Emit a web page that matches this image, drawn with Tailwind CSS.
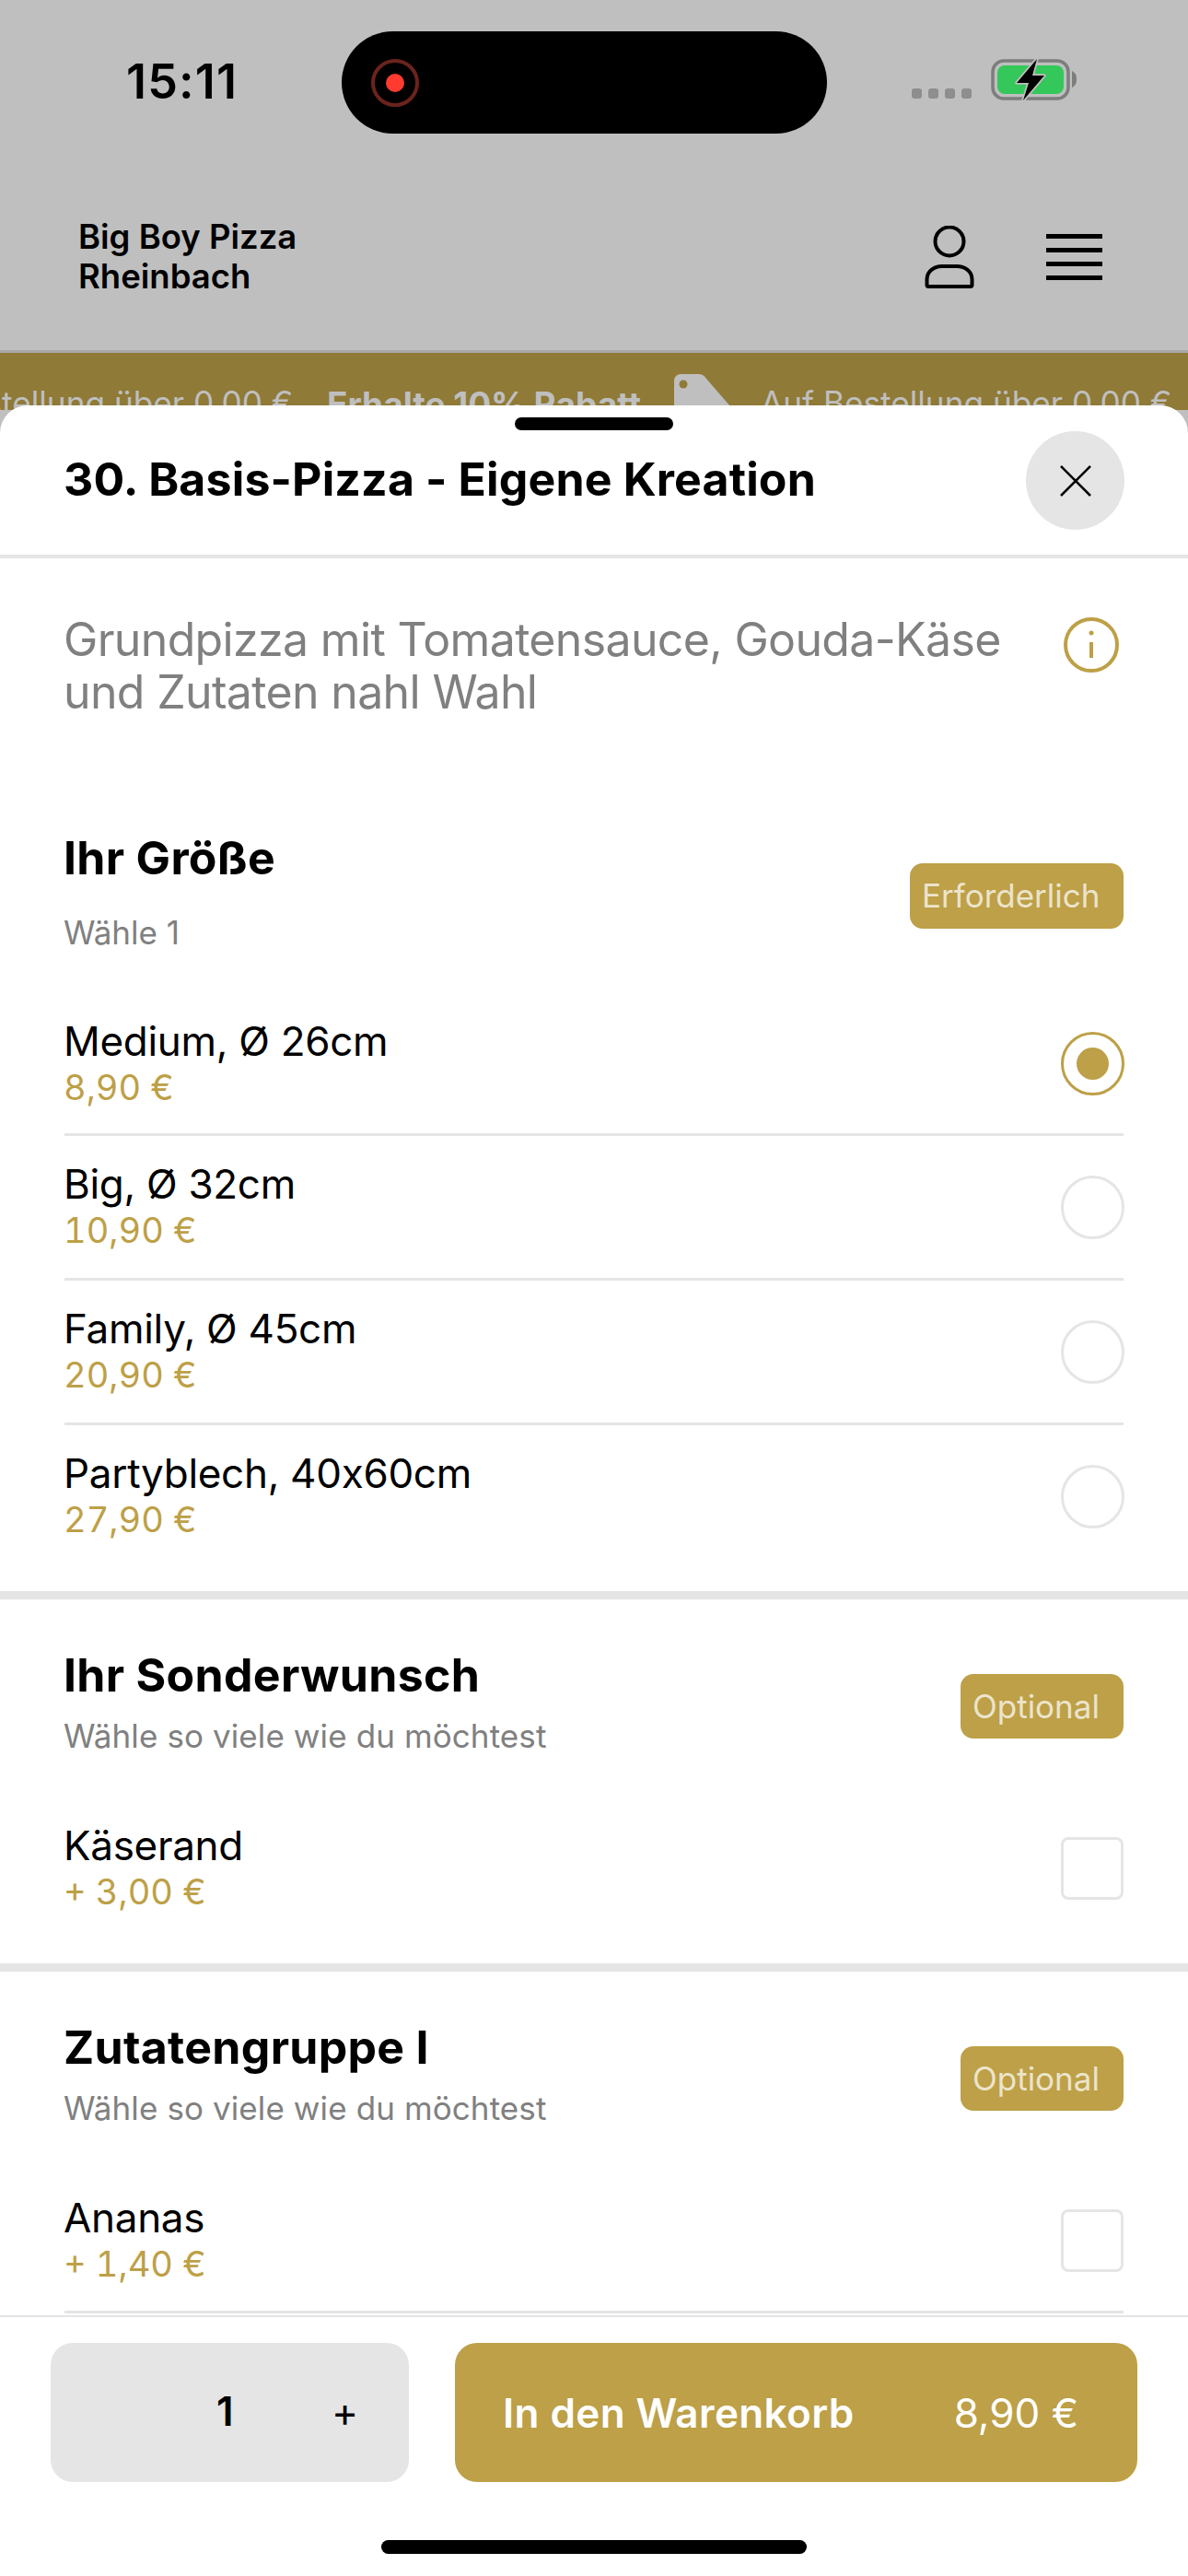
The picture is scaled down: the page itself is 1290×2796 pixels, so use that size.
<!DOCTYPE html>
<html lang="de">
<head>
    <meta charset="UTF-8">
    <meta name="viewport" content="width=device-width, initial-scale=1.0">
    <title>Big Boy Pizza Rheinbach</title>
    <script src="https://cdn.jsdelivr.net/npm/@tailwindcss/browser@4"></script>
</head>
<body class="bg-white font-['Inter',sans-serif]">
    <div class="relative w-[1290px] h-[2796px] overflow-hidden bg-[#bfbfbf]">
        <!-- Status bar -->
        <div class="h-[145px] pt-[34px] pl-[137px] pr-[120px] flex items-start">
            <div class="w-[234px] h-[109px] flex items-center text-[52px] font-semibold text-black tracking-[1.2px]">15:11</div>
            <div class="w-[527px] h-[111px] rounded-[56px] bg-black flex items-center pl-[32px]">
                <div class="w-[52px] h-[52px] rounded-full border-[4px] border-[#6b231d] flex items-center justify-center">
                    <div class="w-[20px] h-[20px] rounded-full bg-[#ff3b30]"></div>
                </div>
            </div>
            <div class="flex-1 h-[111px] flex items-center justify-end gap-[21px] relative">
                <div class="flex gap-[7px] mt-[24px]">
                    <div class="w-[11px] h-[11px] rounded-[3px] bg-[#8e8e8e]"></div>
                    <div class="w-[11px] h-[11px] rounded-[3px] bg-[#8e8e8e]"></div>
                    <div class="w-[11px] h-[11px] rounded-[3px] bg-[#8e8e8e]"></div>
                    <div class="w-[11px] h-[11px] rounded-[3px] bg-[#8e8e8e]"></div>
                </div>
                <svg width="94" height="46" viewBox="0 0 94 46" class="-mt-[6px]">
                    <rect x="2" y="2" width="82" height="41" rx="12" fill="none" stroke="#7d7d7d" stroke-width="3.5"/>
                    <rect x="7" y="7" width="72" height="31" rx="8" fill="#34c759"/>
                    <path d="M88 13 C92 15 93 18 93 22 C93 26 92 29 88 31 Z" fill="#7d7d7d"/>
                    <path d="M50 0 L28 26 L41 26 L35 45 L58 18 L45 18 Z" fill="black" stroke="#bfbfbf" stroke-width="3.5" paint-order="stroke" stroke-linejoin="round"/>
                </svg>
            </div>
        </div>

        <!-- Restaurant header -->
        <div class="h-[238px] border-b-[3px] border-[#a9a9a9] flex items-center pl-[85px] pr-[93px] pt-[33px]">
            <div class="flex-1 text-[36.5px] leading-[43px] font-semibold text-black">Big Boy Pizza<br>Rheinbach</div>
            <svg width="56" height="68" viewBox="0 0 56 68" fill="none" stroke="black" stroke-width="4" class="mr-[77px]">
                <ellipse cx="28" cy="17" rx="15.5" ry="15.5"/>
                <path d="M5 66 C4 66 3.5 65 3.5 64 V58 C3.5 49 12 44 20 44 H36 C44 44 52.5 49 52.5 58 V64 C52.5 65 52 66 51 66 Z" stroke-linejoin="round"/>
            </svg>
            <div class="w-[61px] flex flex-col gap-[10px]">
                <div class="h-[5px] bg-black"></div>
                <div class="h-[5px] bg-black"></div>
                <div class="h-[5px] bg-black"></div>
                <div class="h-[5px] bg-black"></div>
            </div>
        </div>

        <!-- Discount banner, mostly covered by the sheet -->
        <div class="h-[62px] bg-[#8f7a37] relative overflow-hidden text-[35.2px] text-[#bfbfbf] whitespace-nowrap">
            <div class="absolute top-[28px] left-[-128px] flex items-start">
                <span class="w-[483px]">Auf Bestellung über 0,00 €</span>
                <span class="w-[471px] font-bold text-[37px]">Erhalte 10% Rabatt</span>
                <span>Auf Bestellung über 0,00 €</span>
            </div>
            <svg width="64" height="40" viewBox="0 0 64 40" class="absolute left-[732px] top-[23px]">
                <path d="M0 8 Q0 0 8 0 H27 Q32 0 35 5 L61 35 V40 H0 Z" fill="#bfbfbf"/>
                <circle cx="10" cy="11" r="4.5" fill="#8f7a37"/>
            </svg>
        </div>

        <!-- Bottom sheet -->
        <div class="absolute left-0 right-0 top-[440px] bottom-0 bg-white rounded-t-[30px] flex flex-col">
            <div class="h-[166px] shrink-0 border-b-[4px] border-[#e5e5e5] relative flex items-center justify-between pl-[70px] pr-[70px] pt-[1px]">
                <div class="absolute top-[13px] left-[559px] w-[172px] h-[14px] rounded-full bg-black"></div>
                <div class="text-[50px] font-bold text-black -ml-[1px] -mt-[2px] tracking-[0.15px]">30. Basis-Pizza - Eigene Kreation</div>
                <div class="w-[107px] h-[107px] rounded-full bg-[#e5e5e5] flex items-center justify-center mr-[-1px]">
                    <svg width="36" height="36" viewBox="0 0 36 36" stroke="black" stroke-width="2.5"><path d="M2 2 L34 34 M34 2 L2 34"/></svg>
                </div>
            </div>

            <div class="flex-1 overflow-hidden">
                <div class="pl-[70px] pr-[70px] pt-[60px] flex justify-between h-[298px]">
                    <p class="text-[50px] leading-[57px] text-[#808080] w-[1060px] tracking-[-0.65px] -ml-[1px]">Grundpizza mit Tomatensauce, Gouda-Käse und Zutaten nahl Wahl</p>
                    <svg width="60" height="60" viewBox="0 0 60 60" fill="none" stroke="#bda047" stroke-width="4" class="mt-[4px] mr-[5px]">
                        <circle cx="30" cy="30" r="28"/>
                        <path d="M30 27 V44" stroke-width="4"/>
                        <circle cx="30" cy="17" r="2.5" fill="#bda047" stroke="none"/>
                    </svg>
                </div>

                <!-- Ihr Größe -->
                <div class="px-[70px] flex justify-between items-start h-[118px]">
                    <div class="-ml-[1px] -mt-[3px]">
                        <h2 class="text-[50px] leading-[60px] font-bold text-black tracking-[0.3px]">Ihr Größe</h2>
                        <p class="text-[35px] leading-[40px] text-[#808080] mt-[31px]">Wähle 1</p>
                    </div>
                    <div class="mt-[33px] w-[232px] h-[71px] rounded-[14px] bg-[#bda047] flex items-center pl-[13px] text-[35px] text-[#ece4cc]">Erforderlich</div>
                </div>

                <div class="px-[70px] pt-[54px] pb-[23px] border-b-[9px] border-[#e5e5e5]">
                    <div class="h-[157px] border-b-[3px] border-[#e5e5e5] flex justify-between items-center pt-[3px]">
                        <div class="-ml-[1px]">
                            <div class="text-[44px] leading-[50px] text-black tracking-[-0.3px]">Medium, Ø 26cm</div>
                            <div class="text-[38px] leading-[50px] text-[#bda047] tabular-nums">8,90 €</div>
                        </div>
                        <div class="w-[69px] h-[69px] rounded-full border-[3px] border-[#bda047] flex items-center justify-center mr-[-1px]">
                            <div class="w-[35px] h-[35px] rounded-full bg-[#bda047]"></div>
                        </div>
                    </div>
                    <div class="h-[157px] border-b-[3px] border-[#e5e5e5] flex justify-between items-center">
                        <div class="-ml-[1px]">
                            <div class="text-[44px] leading-[50px] text-black tracking-[-0.3px]">Big, Ø 32cm</div>
                            <div class="text-[38px] leading-[50px] text-[#bda047] tabular-nums">10,90 €</div>
                        </div>
                        <div class="w-[69px] h-[69px] rounded-full border-[3px] border-[#e5e5e5] mr-[-1px]"></div>
                    </div>
                    <div class="h-[157px] border-b-[3px] border-[#e5e5e5] flex justify-between items-center">
                        <div class="-ml-[1px]">
                            <div class="text-[44px] leading-[50px] text-black tracking-[-0.3px]">Family, Ø 45cm</div>
                            <div class="text-[38px] leading-[50px] text-[#bda047] tabular-nums">20,90 €</div>
                        </div>
                        <div class="w-[69px] h-[69px] rounded-full border-[3px] border-[#e5e5e5] mr-[-1px]"></div>
                    </div>
                    <div class="h-[157px] flex justify-between items-center pb-[3px]">
                        <div class="-ml-[1px]">
                            <div class="text-[44px] leading-[50px] text-black tracking-[-0.3px]">Partyblech, 40x60cm</div>
                            <div class="text-[38px] leading-[50px] text-[#bda047] tabular-nums">27,90 €</div>
                        </div>
                        <div class="w-[69px] h-[69px] rounded-full border-[3px] border-[#e5e5e5] mr-[-1px]"></div>
                    </div>
                </div>

                <!-- Ihr Sonderwunsch -->
                <div class="border-b-[9px] border-[#e5e5e5] px-[70px] h-[404px]">
                    <div class="flex justify-between items-start pt-[52px]">
                        <div class="-ml-[1px]">
                            <h2 class="text-[50px] leading-[60px] font-bold text-black tracking-[0.3px]">Ihr Sonderwunsch</h2>
                            <p class="text-[35px] leading-[40px] text-[#808080] mt-[16px] tracking-[0.1px]">Wähle so viele wie du möchtest</p>
                        </div>
                        <div class="mt-[29px] w-[177px] h-[70px] rounded-[14px] bg-[#bda047] flex items-center pl-[13px] text-[35px] text-[#ece4cc]">Optional</div>
                    </div>
                    <div class="flex justify-between items-center mt-[74px]">
                        <div class="-ml-[1px]">
                            <div class="text-[44px] leading-[50px] text-black tracking-[-0.3px]">Käserand</div>
                            <div class="text-[38px] leading-[50px] text-[#bda047] tabular-nums">+ 3,00 €</div>
                        </div>
                        <div class="w-[68px] h-[68px] rounded-[8px] border-[3px] border-[#e5e5e5]"></div>
                    </div>
                </div>

                <!-- Zutatengruppe I -->
                <div class="px-[70px]">
                    <div class="flex justify-between items-start pt-[52px]">
                        <div class="-ml-[1px]">
                            <h2 class="text-[50px] leading-[60px] font-bold text-black tracking-[0.3px]">Zutatengruppe I</h2>
                            <p class="text-[35px] leading-[40px] text-[#808080] mt-[16px] tracking-[0.1px]">Wähle so viele wie du möchtest</p>
                        </div>
                        <div class="mt-[29px] w-[177px] h-[70px] rounded-[14px] bg-[#bda047] flex items-center pl-[13px] text-[35px] text-[#ece4cc]">Optional</div>
                    </div>
                    <div class="flex justify-between items-center mt-[74px] pb-[26px] border-b-[3px] border-[#e5e5e5]">
                        <div class="-ml-[1px]">
                            <div class="text-[44px] leading-[50px] text-black tracking-[-0.3px]">Ananas</div>
                            <div class="text-[38px] leading-[50px] text-[#bda047] tabular-nums">+ 1,40 €</div>
                        </div>
                        <div class="w-[68px] h-[68px] rounded-[8px] border-[3px] border-[#e5e5e5]"></div>
                    </div>
                </div>
            </div>

            <!-- Footer -->
            <div class="h-[283px] shrink-0 bg-white border-t-[2px] border-[#e5e5e5] pt-[28px] pl-[55px] pr-[55px] flex items-start justify-between">
                <div class="w-[389px] h-[151px] rounded-[24px] bg-[#e5e5e5] flex items-center text-black">
                    <span class="ml-[180px] w-[125px] text-[44px] font-semibold -mt-[4px]">1</span>
                    <span class="text-[44px] leading-none -mt-[2px]">+</span>
                </div>
                <div class="w-[741px] h-[151px] rounded-[24px] bg-[#bda047] flex items-center justify-between pl-[52px] pr-[64px] text-white text-[44px]">
                    <span class="font-semibold tracking-[0.4px]">In den Warenkorb</span>
                    <span>8,90 €</span>
                </div>
            </div>
        </div>

        <!-- Home indicator -->
        <div class="absolute left-[414px] top-[2757px] w-[462px] h-[15px] rounded-full bg-black"></div>
    </div>
</body>
</html>
